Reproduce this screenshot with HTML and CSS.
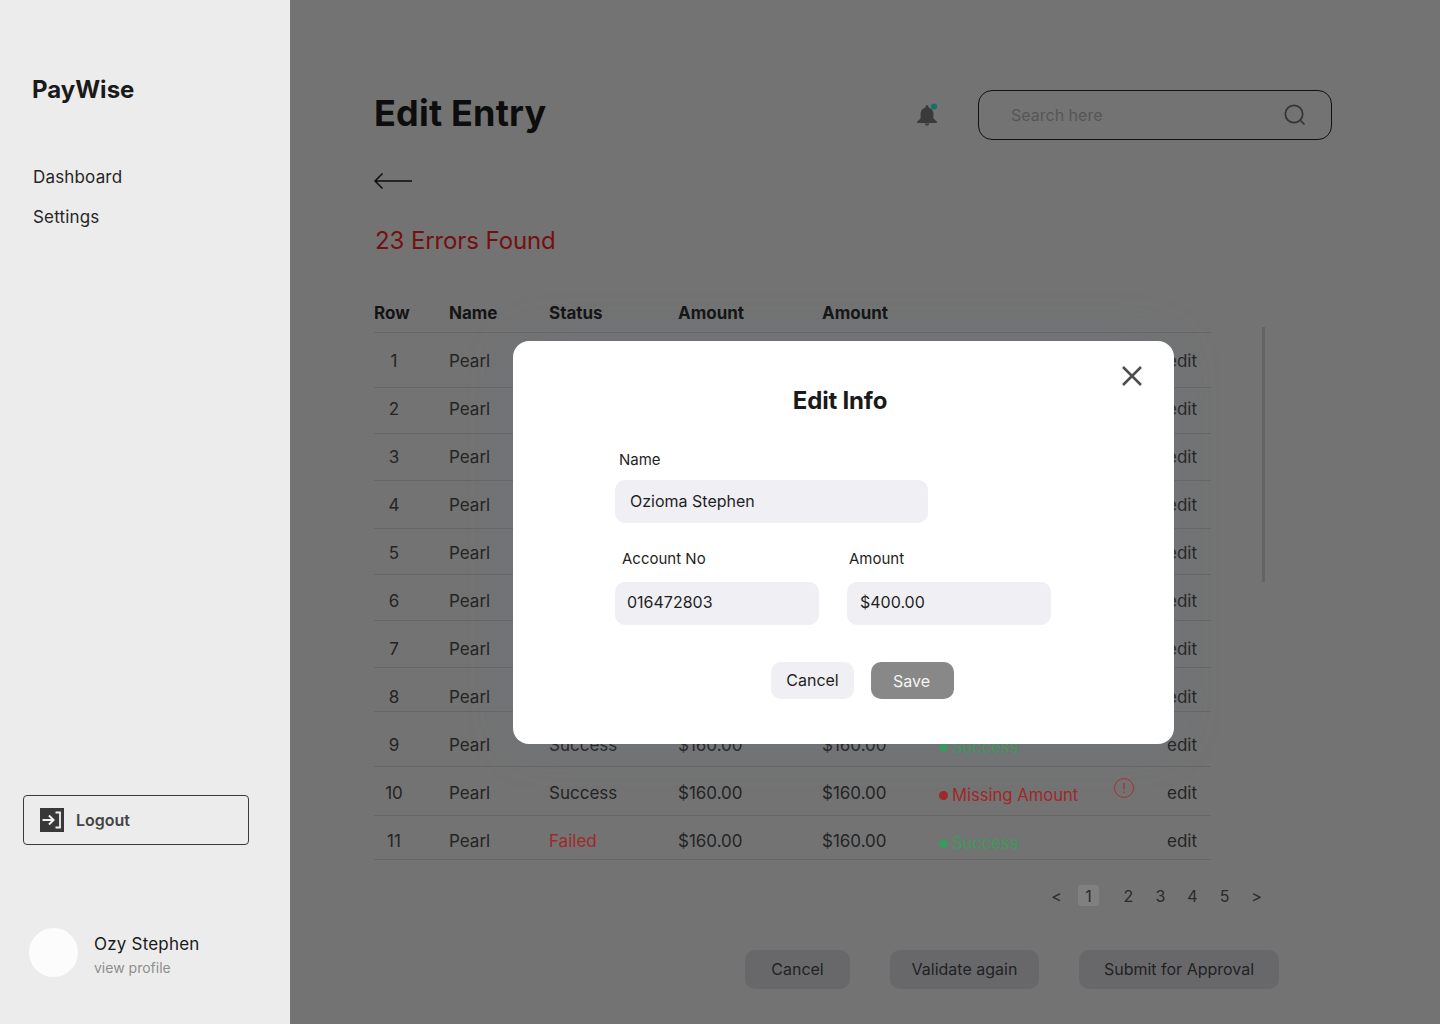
FILE: index.html
```html
<!DOCTYPE html>
<html lang="en">
<head>
<meta charset="utf-8">
<title>PayWise - Edit Entry</title>
<link rel="stylesheet" href="styles.css">
</head>
<body>
<div class="app">
  <aside class="sidebar">
    <div class="brand">PayWise</div>
    <nav class="nav">
      <a class="nav-link">Dashboard</a>
      <a class="nav-link">Settings</a>
    </nav>
    <button class="logout">
      <svg class="logout-icon" viewBox="0 0 24 24" width="24" height="24"><rect width="24" height="24" fill="#383838"/><path d="M2.5 12H13M9 7.5l4.5 4.5L9 16.5" fill="none" stroke="#f2f2f2" stroke-width="2"/><path d="M15.5 4.5H20V19.5H15.5" fill="none" stroke="#f2f2f2" stroke-width="1.8"/></svg>
      <span>Logout</span>
    </button>
    <div class="profile">
      <div class="avatar"></div>
      <div class="profile-text">
        <div class="profile-name">Ozy Stephen</div>
        <div class="profile-link">view profile</div>
      </div>
    </div>
  </aside>
  <main class="main">
    <header class="topbar">
      <h1 class="title">Edit Entry</h1>
      <div class="topbar-tools">
        <svg class="bell" viewBox="0 0 24 24" width="24" height="24"><path d="M11 2.200c-1 0-1.600.7-1.600 1.600v.6C6.400 5.200 4.600 7.700 4.600 10.800v4.600L1.200 18.500v1.400h19.600v-1.400L17.400 15.400v-4.600c0-3.100-1.800-5.600-4.800-6.400v-.6c0-.9-.6-1.600-1.600-1.600z" fill="#3a3a3a"/><path d="M8.800 20.500c0 1.200 1 2.100 2.200 2.100s2.200-.9 2.200-2.100z" fill="#3a3a3a"/><circle cx="18" cy="3.500" r="3.100" fill="#1c6f66"/></svg>
        <div class="search">
          <span class="search-text">Search here</span>
          <svg viewBox="0 0 24 24" width="24" height="24"><circle cx="11" cy="11" r="8.700" fill="none" stroke="#333" stroke-width="1.700"/><path d="M17.500 17.500L21.500 21.500" stroke="#333" stroke-width="1.700" fill="none"/></svg>
        </div>
      </div>
    </header>
    <svg class="back" viewBox="0 0 38 18" width="38" height="18"><path d="M38 9H1M8.500 1.500L1 9l7.500 7.500" fill="none" stroke="#0d0d0d" stroke-width="1.500"/></svg>
    <div class="errors">23 Errors Found</div>
    <div class="table">
      <div class="row head"><span class="c-row">Row</span><span>Name</span><span>Status</span><span>Amount</span><span>Amount</span><span></span><span></span></div>
      <div class="row"><span class="c-num">1</span><span>Pearl</span><span></span><span></span><span></span><span></span><span>edit</span></div>
      <div class="row"><span class="c-num">2</span><span>Pearl</span><span></span><span></span><span></span><span></span><span>edit</span></div>
      <div class="row"><span class="c-num">3</span><span>Pearl</span><span></span><span></span><span></span><span></span><span>edit</span></div>
      <div class="row"><span class="c-num">4</span><span>Pearl</span><span></span><span></span><span></span><span></span><span>edit</span></div>
      <div class="row"><span class="c-num">5</span><span>Pearl</span><span></span><span></span><span></span><span></span><span>edit</span></div>
      <div class="row"><span class="c-num">6</span><span>Pearl</span><span></span><span></span><span></span><span></span><span>edit</span></div>
      <div class="row"><span class="c-num">7</span><span>Pearl</span><span></span><span></span><span></span><span></span><span>edit</span></div>
      <div class="row"><span class="c-num">8</span><span>Pearl</span><span></span><span></span><span></span><span></span><span>edit</span></div>
      <div class="row"><span class="c-num">9</span><span>Pearl</span><span>Success</span><span>$160.00</span><span>$160.00</span><span class="state ok">Success</span><span>edit</span></div>
      <div class="row"><span class="c-num">10</span><span>Pearl</span><span>Success</span><span>$160.00</span><span>$160.00</span><span class="state bad">Missing Amount<svg class="alert" viewBox="0 0 20 20" width="20" height="20"><circle cx="10" cy="10" r="9.500" fill="none" stroke="#a83232" stroke-width="1"/><path d="M10 5v6.500M10 13.500v1.500" stroke="#a83232" stroke-width="1.300" fill="none"/></svg></span><span>edit</span></div>
      <div class="row"><span class="c-num">11</span><span>Pearl</span><span class="failed">Failed</span><span>$160.00</span><span>$160.00</span><span class="state ok">Success</span><span>edit</span></div>
    </div>
    <div class="pagination">
      <span class="page">&lt;</span>
      <span class="page current">1</span>
      <span class="page">2</span>
      <span class="page">3</span>
      <span class="page">4</span>
      <span class="page">5</span>
      <span class="page">&gt;</span>
    </div>
    <div class="actions">
      <button class="action w-cancel">Cancel</button>
      <button class="action w-validate">Validate again</button>
      <button class="action w-submit">Submit for Approval</button>
    </div>
    <div class="scrollbar"></div>
    <section class="modal">
      <svg class="close" viewBox="0 0 22 22" width="22" height="22"><path d="M2 2L20 20M20 2L2 20" stroke="#4d4d4d" stroke-width="2.500" fill="none"/></svg>
      <h2 class="modal-title">Edit Info</h2>
      <div class="form">
        <label class="label label-name">Name</label>
        <div class="input input-name">Ozioma Stephen</div>
        <div class="form-row">
          <div class="field">
            <label class="label label-account">Account No</label>
            <div class="input input-small">016472803</div>
          </div>
          <div class="field">
            <label class="label label-amount">Amount</label>
            <div class="input input-small input-amount">$400.00</div>
          </div>
        </div>
        <div class="modal-actions">
          <button class="modal-btn">Cancel</button>
          <button class="modal-btn save">Save</button>
        </div>
      </div>
    </section>
  </main>
</div>
</body>
</html>
```
FILE: styles.css
```css
* { box-sizing: border-box; }
html, body { margin: 0; padding: 0; height: 1024px; overflow: hidden; }
body { font-family: Inter, "Liberation Sans", sans-serif; color: #1f1f1f; background: #737373; }
button { font-family: inherit; border: 0; padding: 0; }
h1, h2 { margin: 0; }

.app { display: flex; width: 1440px; height: 1024px; }

.sidebar { width: 290px; flex: none; background: #ececec; display: flex; flex-direction: column; }
.brand { margin: 74px 0 0 32px; font-size: 24px; line-height: 31px; font-weight: 700; color: #1a1a1a; }
.nav { margin: 60px 0 0 33px; display: flex; flex-direction: column; gap: 16px; }
.nav-link { font-size: 17px; line-height: 24px; letter-spacing: .17px; color: #262626; }
.logout { margin: 566px 0 0 23px; width: 226px; height: 50px; border: 1px solid #3a3a3a; border-radius: 4px; background: transparent; display: flex; align-items: center; gap: 12px; padding-left: 16px; font-size: 16px; font-weight: 600; color: #444; }
.logout-icon { flex: none; }
.profile { margin: 83px 0 0 29px; display: flex; align-items: flex-start; gap: 16px; }
.avatar { width: 49px; height: 49px; border-radius: 50%; background: #fcfcfc; }
.profile-text { display: flex; flex-direction: column; padding-top: 4px; }
.profile-name { font-size: 17px; line-height: 24px; letter-spacing: .2px; color: #1a1a1a; }
.profile-link { font-size: 14px; line-height: 22px; color: #8e8e8e; margin-top: 1px; }

.main { position: relative; flex: 1; background: #737373; padding: 90px 108px 0 84px; }
.topbar { display: flex; justify-content: space-between; align-items: center; height: 50px; }
.title { font-size: 36px; line-height: 46px; font-weight: 700; letter-spacing: .2px; color: #0d0d0d; padding-bottom: 4px; height: 50px; }
.topbar-tools { display: flex; align-items: center; gap: 38px; }
.bell { display: block; }
.search { width: 354px; height: 50px; border: 1px solid #111; border-radius: 14px; display: flex; align-items: center; justify-content: space-between; padding: 0 24px 0 32px; }
.search-text { font-size: 16px; line-height: 24px; color: #565656; }

.back { display: block; margin-top: 32px; }
.errors { margin: 36px 0 0 1px; font-size: 24px; line-height: 30px; letter-spacing: -.1px; color: #741010; }

.table { width: 837px; margin-top: 40px; }
.row { display: grid; grid-template-columns: 75px 100px 129px 144px 117px 228px 44px; border-bottom: 1px solid #666; font-size: 17px; line-height: 25px; color: #242424; height: var(--h); padding-top: var(--p); }
.row span { white-space: nowrap; }
.row.head { font-weight: 700; color: #141414; height: 37px; padding-top: 5px; }
.row:nth-child(2) { --h: 55px; --p: 16px; }
.row:nth-child(3) { --h: 46px; --p: 9px; }
.row:nth-child(4) { --h: 47px; --p: 11px; }
.row:nth-child(5) { --h: 48px; --p: 12px; }
.row:nth-child(6) { --h: 46px; --p: 12px; }
.row:nth-child(7) { --h: 46px; --p: 14px; }
.row:nth-child(8) { --h: 47px; --p: 16px; }
.row:nth-child(9) { --h: 44px; --p: 17px; }
.row:nth-child(10) { --h: 55px; --p: 21px; }
.row:nth-child(11) { --h: 49px; --p: 14px; }
.row:nth-child(12) { --h: 44px; --p: 13px; }
.c-num { width: 40px; text-align: center; }
.failed { color: #a02828; }
.state { position: relative; display: block; padding-left: 13px; margin-top: 1px; font-size: 16.6px; line-height: 26px; }
.state::before { content: ""; position: absolute; left: 0; top: 9px; width: 9px; height: 9px; border-radius: 50%; }
.state.ok { color: #3b9a5e; }
.state.ok::before { background: #3b9a5e; }
.state.bad { color: #a02828; }
.state.bad::before { background: #a02828; }
.alert { position: absolute; left: 175px; top: -4px; }

.pagination { display: flex; justify-content: flex-end; align-items: center; gap: 11px; margin-top: 25px; padding-right: 65px; height: 21px; }
.page { width: 21px; height: 21px; line-height: 22px; text-align: center; font-size: 16px; color: #2a2a2a; }
.page.current { background: #808080; border-radius: 3px; margin-right: 8px; }

.actions { display: flex; justify-content: flex-end; gap: 40px; margin-top: 44px; padding-right: 53px; }
.action { height: 39px; background: #68686b; border-radius: 10px; font-size: 16px; color: #222; padding-bottom: 2px; }
.w-cancel { width: 105px; }
.w-validate { width: 149px; }
.w-submit { width: 200px; }

.scrollbar { position: absolute; left: 972px; top: 327px; width: 3px; height: 255px; background: #646464; }

.modal { position: absolute; left: 223px; top: 341px; width: 661px; height: 403px; background: #fff; border-radius: 16px; box-shadow: 0 0 50px rgba(100,120,150,.2); padding-top: 43px; }
.close { position: absolute; left: 608px; top: 24px; }
.modal-title { text-align: center; padding-right: 7px; font-size: 24px; line-height: 34px; font-weight: 700; letter-spacing: -.2px; color: #1a1a1a; }
.form { margin: 32px 0 0 102px; width: 436px; }
.label { display: block; font-size: 15px; line-height: 20px; color: #1f1f1f; }
.label-name { margin-left: 4px; }
.label-account { margin-left: 7px; }
.label-amount { margin-left: 2px; }
.input { background: #efeff4; border-radius: 10px; height: 43px; font-size: 16px; line-height: 42px; color: #1f1f1f; }
.input-name { width: 313px; margin-top: 10px; padding-left: 15px; }
.form-row { display: flex; gap: 28px; margin-top: 26px; }
.input-small { width: 204px; margin-top: 13px; padding-left: 12px; line-height: 41px; }
.input-amount { padding-left: 13px; }
.modal-actions { display: flex; gap: 17px; margin: 37px 0 0 156px; }
.modal-btn { width: 83px; height: 37px; border-radius: 10px; background: #efeff4; font-size: 16px; color: #1f1f1f; padding-bottom: 2px; }
.modal-btn.save { background: #888; color: #f4f4f4; padding: 0 2px 0 0; }
```
